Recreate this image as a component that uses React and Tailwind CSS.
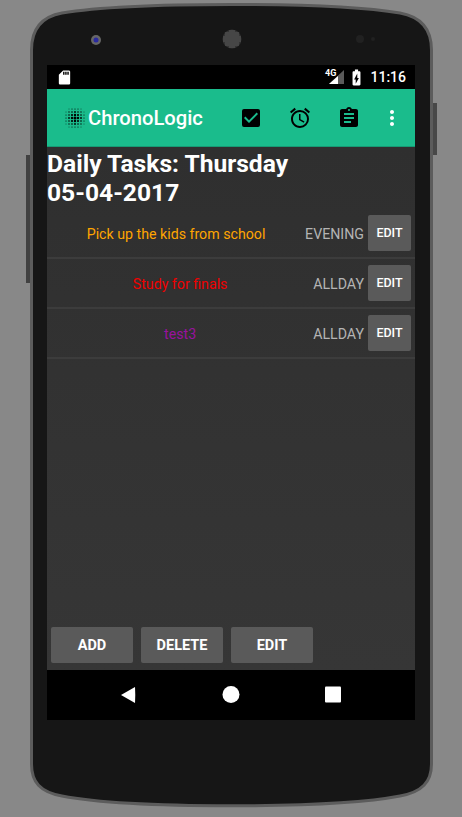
import React from "react";
import { MdCheckBox, MdAlarm, MdAssignment, MdMoreVert, MdSdStorage, MdBatteryChargingFull } from "react-icons/md";

const TASKS = [
  { name: "Pick up the kids from school", color: "text-[#ffa500]", when: "EVENING" },
  { name: "Study for finals", color: "text-[#f00000]", when: "ALLDAY" },
  { name: "test3", color: "text-[#99119f]", when: "ALLDAY" },
];

// halftone dot logo in the toolbar
function Logo() {
  const dots = [];
  for (let y = -3; y <= 3; y++) {
    for (let x = -3; x <= 3; x++) {
      const d = Math.sqrt(x * x + y * y);
      if (d > 3.7) continue;
      dots.push(<circle key={x + "_" + y} cx={10 + x * 3} cy={10 + y * 3} r={Math.max(0.45, 1.5 - d * 0.3)} fill="#000" />);
    }
  }
  return (
    <svg width="20" height="20" viewBox="0 0 20 20" className="shrink-0">
      {dots}
    </svg>
  );
}

// phone body outline, bowed at top and bottom, with the bezel's camera and speaker
function Shell() {
  const d = "M31.5 50 C31.5 30 40 17 62 13 C130 1.5 332 1.5 400 13 C422 17 431.5 30 431.5 50 L431.5 764 C431.5 782 422 792 400 796 C332 809 130 809 62 796 C40 792 31.5 782 31.5 764 Z";
  const mesh = [];
  for (let y = -8; y <= 8; y += 2) {
    for (let x = -8; x <= 8; x += 2) {
      if (x * x + y * y <= 72) mesh.push(<circle key={x + "_" + y} cx={232 + x} cy={39 + y} r="0.7" fill="#6a6a6a" />);
    }
  }
  return (
    <svg width="462" height="817" viewBox="0 0 462 817" className="absolute inset-0">
      <path d="M26 155 h5 v128 h-5 z" fill="#414141" />
      <path d="M432 103 h5 v52 h-5 z" fill="#484848" />
      <path d={d} fill="#161616" stroke="#5c5c5c" strokeWidth="3" />
      <circle cx="96" cy="40" r="5" fill="#666" />
      <circle cx="96" cy="40" r="2.5" fill="#2a2aa0" />
      <circle cx="232" cy="39" r="9.5" fill="#333" />
      {mesh}
      <circle cx="360" cy="39" r="4" fill="#212121" />
      <circle cx="373" cy="39" r="2" fill="#212121" />
    </svg>
  );
}

function StatusBar() {
  return (
    <div className="h-6 bg-black flex items-center px-[9px] text-white">
      <MdSdStorage size={17} />
      <div className="flex-1" />
      <div className="relative w-[18px] h-[16px] mr-[2px]">
        <svg width="18" height="16" viewBox="0 0 18 16" className="absolute inset-0">
          <path d="M17 1 V15 H2 Z" fill="#5a5a5a" />
          <path d="M11 7 V15 H2 Z" fill="#fff" />
        </svg>
        <span className="absolute left-[-2px] top-[-1px] text-[9px] leading-[10px] font-bold">4G</span>
      </div>
      <MdBatteryChargingFull size={19} className="mr-[4.5px]" />
      <span className="text-[14px] leading-none font-medium">11:16</span>
    </div>
  );
}

function Toolbar() {
  return (
    <div className="h-[58px] pt-[1px] bg-[#1abc8c] border-b border-[#169a74] flex items-center pl-[18px] text-white">
      <Logo />
      <span className="text-[20.2px] leading-none ml-[3px] font-medium">ChronoLogic</span>
      <div className="flex-1" />
      <MdCheckBox size={24} className="text-black" />
      <MdAlarm size={24} className="text-black ml-[25px]" />
      <MdAssignment size={24} className="text-black ml-[25px]" />
      <MdMoreVert size={24} className="ml-[19px] mr-[11px]" />
    </div>
  );
}

function TaskRow({ name, color, when }) {
  return (
    <div className="h-[50px] flex items-center border-b-2 border-[#3c3c3c]">
      <span className={"flex-1 text-center text-[14.2px] pt-[3px] " + color}>{name}</span>
      <span className="text-[14.2px] text-[#b4b4b4] mr-1 pt-[3px]">{when}</span>
      <button className="w-[43px] h-[36px] pt-[1px] bg-[#5a5a5a] rounded-[2px] text-white text-[12.5px] font-medium mr-[4px]">EDIT</button>
    </div>
  );
}

export default function App() {
  return (
    <div className="relative w-[462px] h-[817px] bg-[#888888] overflow-hidden font-['Roboto',sans-serif]">
      <Shell />
      <div className="relative pt-[65px] pl-[47px] w-[415px]">
        <div className="w-[368px] h-[655px] flex flex-col">
          <StatusBar />
          <Toolbar />
          <div className="flex-1 bg-linear-to-b from-[#2f2f2f] to-[#363636] flex flex-col">
            <h1 className="text-[24.6px] leading-[29px] font-bold text-white mt-[2px] mb-[2px]">
              Daily Tasks: Thursday
              <br />
              05-04-2017
            </h1>
            {TASKS.map((t) => (
              <TaskRow key={t.name} {...t} />
            ))}
            <div className="flex-1" />
            <div className="flex gap-2 pl-1 pb-[7px]">
              {["ADD", "DELETE", "EDIT"].map((b) => (
                <button key={b} className="w-[82px] h-[36px] pt-[1px] bg-[#5a5a5a] rounded-[2px] text-white text-[14.5px] font-bold">
                  {b}
                </button>
              ))}
            </div>
          </div>
          <div className="h-[50px] bg-black flex items-center">
            <svg width="368" height="50" viewBox="0 0 368 50">
              <path d="M74 25 L88 17 Q88.5 25 88 33 Z" fill="#fff" />
              <circle cx="184" cy="24.5" r="8.5" fill="#fff" />
              <rect x="278" y="16.5" width="16" height="16" rx="1" fill="#fff" />
            </svg>
          </div>
        </div>
      </div>
    </div>
  );
}
